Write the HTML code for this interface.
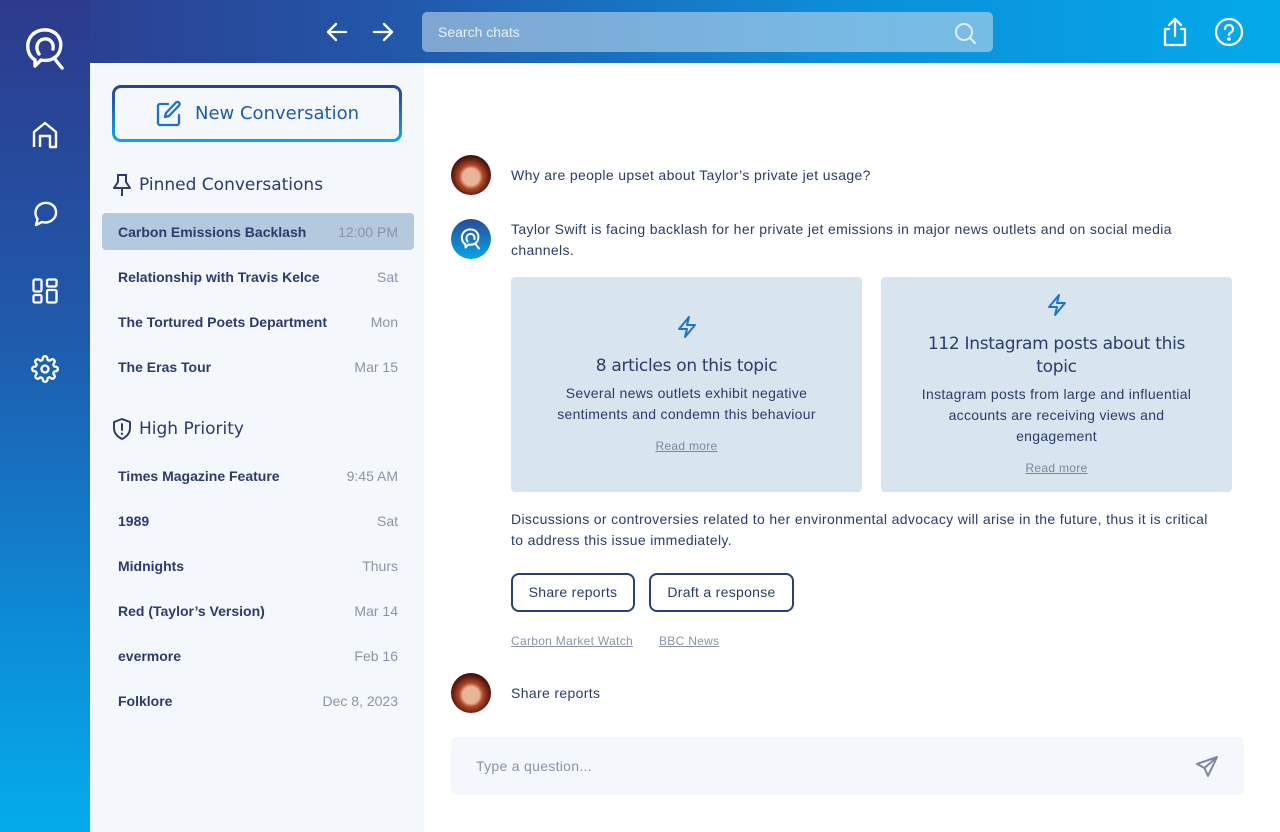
<!DOCTYPE html>
<html><head><meta charset="utf-8"><style>
*{margin:0;padding:0;box-sizing:border-box}
body{width:1280px;height:832px;overflow:hidden;font-family:"Liberation Sans",sans-serif;color:#2b3b6b;background:#fff;position:relative}
.top{position:absolute;left:0;top:0;width:1280px;height:63px;background:linear-gradient(90deg,#2d3a8c 0%,#2356a8 30%,#0e8cd8 65%,#03aaea 100%)}
.side{position:absolute;left:0;top:0;width:90px;height:832px;background:linear-gradient(180deg,#2d3a8c 0%,#1f5aac 40%,#0d8bd6 75%,#04aceb 100%)}
.panel{position:absolute;left:90px;top:63px;width:334px;height:769px;background:#f4f7fc}
.abs{position:absolute}
.search{left:422px;top:12px;width:571px;height:40px;border-radius:5px;background:rgba(190,215,235,.6);color:#e8f0f8;font-size:14px;padding:12px 16px}
.newbox{left:112px;top:85px;width:290px;height:57px;border-radius:9px;padding:3px;background:linear-gradient(180deg,#2c3f8f,#08aaeb)}
.newbox div{width:100%;height:100%;background:#f4f7fc;border-radius:6px;display:flex;align-items:center;justify-content:center;gap:12px;font-size:18px;color:#1f5ba8;font-family:"DejaVu Sans",sans-serif}
.h{font-family:"DejaVu Sans",sans-serif;font-size:17px;color:#2b3b6b;display:flex;align-items:center;gap:7px}
.item{position:absolute;left:102px;width:312px;height:37px;border-radius:4px;display:flex;justify-content:space-between;align-items:center;padding:0 16px;font-size:14px}
.item b{font-weight:bold;color:#2b3b6b}
.item span{color:#8b93a8}
.sel{background:#b4c9de}
.av{position:absolute;left:451px;width:40px;height:40px;border-radius:50%}
.p{position:absolute;font-size:14px;line-height:21px;color:#2b3b6b;letter-spacing:.35px}
.card{position:absolute;background:#d8e4ee;border-radius:4px;text-align:center;color:#2b3b6b}
.card h3{font-family:"DejaVu Sans",sans-serif;font-weight:normal;font-size:17px;line-height:23px;letter-spacing:-.3px}
.card p{font-size:14px;line-height:21px;margin-top:5px;letter-spacing:.3px}
.card a{font-size:12px;color:#7d87a0;text-decoration:underline;display:block;letter-spacing:.3px}
.btn{position:absolute;top:573px;height:39px;border:2px solid #2b3f72;border-radius:8px;font-size:14px;padding:9px 0;text-align:center;color:#2b3b6b;letter-spacing:.3px}
.lnk{position:absolute;top:634px;font-size:12px;color:#8a92a8;text-decoration:underline;letter-spacing:.3px}
.input{left:451px;top:737px;width:793px;height:58px;background:#f4f7fc;border-radius:5px;font-size:14px;color:#8a92a8;padding:21px 25px;letter-spacing:.3px}
</style></head><body>
<div class="top"></div>
<div class="side"></div>
<div class="panel"></div>
<svg class="abs" style="left:24px;top:27px" width="44" height="46" viewBox="0 0 44 46" fill="none" stroke="#fff" stroke-width="3.4" stroke-linecap="round" stroke-linejoin="round"><path d="M11 33 C3 28 1 16 8 8 C15 1 28 1 34 9 C39 16 37 27 30 31"/><path d="M11 33 L11 39 L17 33 C22 34 27 33 30 31"/><path d="M15 27 C11 21 13 13 20 12 C26 11 30 16 29 22"/><path d="M30 31 L38 41"/></svg>
<svg class="abs" style="left:31px;top:121px" width="28" height="28" viewBox="0 0 28 28" fill="none" stroke="#fff" stroke-width="2.4" stroke-linejoin="round"><path d="M3 26 V11 L14 2 L25 11 V26 H19 V15 H9 V26"/></svg>
<svg class="abs" style="left:31px;top:200px" width="28" height="28" viewBox="0 0 28 28" fill="none" stroke="#fff" stroke-width="2.4" stroke-linejoin="round"><path d="M5 25 L6.5 19 C3 14 4 7 10 4 C16 1 24 4 25 11 C26 19 18 24 11 22 Z"/></svg>
<svg class="abs" style="left:32px;top:278px" width="26" height="26" viewBox="0 0 26 26" fill="none" stroke="#fff" stroke-width="2.3"><rect x="1.5" y="1.5" width="8" height="12" rx="1.5"/><rect x="1.5" y="17" width="8" height="7.5" rx="1.5"/><rect x="15" y="1.5" width="9.5" height="7" rx="1.5"/><rect x="15" y="12" width="9.5" height="12.5" rx="1.5"/></svg>
<svg class="abs" style="left:31px;top:355px" width="28" height="28" viewBox="0 0 24 24" fill="none" stroke="#fff" stroke-width="2"><circle cx="12" cy="12" r="3"/><path d="M19.4 15a1.65 1.65 0 0 0 .33 1.820l.06.06a2 2 0 1 1-2.830 2.830l-.06-.06a1.65 1.65 0 0 0-1.820-.33 1.65 1.65 0 0 0-1 1.510V21a2 2 0 1 1-4 0v-.09A1.65 1.65 0 0 0 9 19.4a1.65 1.65 0 0 0-1.820.33l-.06.06a2 2 0 1 1-2.830-2.830l.06-.06A1.65 1.65 0 0 0 4.68 15a1.65 1.65 0 0 0-1.510-1H3a2 2 0 1 1 0-4h.09A1.65 1.65 0 0 0 4.6 9a1.65 1.65 0 0 0-.33-1.820l-.06-.06a2 2 0 1 1 2.830-2.830l.06.06A1.65 1.65 0 0 0 9 4.68a1.65 1.65 0 0 0 1-1.510V3a2 2 0 1 1 4 0v.09a1.65 1.65 0 0 0 1 1.510 1.65 1.65 0 0 0 1.820-.33l.06-.06a2 2 0 1 1 2.830 2.830l-.06.06A1.65 1.65 0 0 0 19.4 9a1.65 1.65 0 0 0 1.510 1H21a2 2 0 1 1 0 4h-.09a1.65 1.65 0 0 0-1.510 1z"/></svg>
<svg class="abs" style="left:325px;top:20px" width="24" height="24" viewBox="0 0 24 24" fill="none" stroke="#fff" stroke-width="2.3" stroke-linecap="round" stroke-linejoin="round"><path d="M21 12H3M11 4L3 12L11 20"/></svg>
<svg class="abs" style="left:371px;top:20px" width="24" height="24" viewBox="0 0 24 24" fill="none" stroke="#fff" stroke-width="2.3" stroke-linecap="round" stroke-linejoin="round"><path d="M3 12H21M13 4L21 12L13 20"/></svg>
<div class="abs search">Search chats</div>
<svg class="abs" style="left:953px;top:21px" width="24" height="24" viewBox="0 0 24 24" fill="none" stroke="#e6eef7" stroke-width="2" stroke-linecap="round"><circle cx="11" cy="11" r="8"/><path d="M17 17L22 22"/></svg>
<svg class="abs" style="left:1161px;top:17px" width="28" height="30" viewBox="0 0 28 30" fill="none" stroke="#fff" stroke-width="2.3" stroke-linecap="round" stroke-linejoin="round"><path d="M8 12H4V28H24V12H20M14 2V19M8 8L14 2L20 8"/></svg>
<svg class="abs" style="left:1214px;top:17px" width="30" height="30" viewBox="0 0 30 30" fill="none" stroke="#fff" stroke-width="2.3" stroke-linecap="round"><circle cx="15" cy="15" r="13"/><path d="M11 12a4 4 0 1 1 5.5 3.7c-1 .5-1.5 1.2-1.5 2.3"/><circle cx="15" cy="22" r=".6" fill="#fff"/></svg>
<div class="abs newbox"><div><svg width="28" height="28" viewBox="0 0 28 28" fill="none" stroke="#1f72c4" stroke-width="2.3" stroke-linecap="round" stroke-linejoin="round"><path d="M13 4H5a2 2 0 0 0-2 2v17a2 2 0 0 0 2 2h17a2 2 0 0 0 2-2v-8"/><path d="M21 2.5a2.1 2.1 0 0 1 3 3L14 16l-4 1 1-4z"/></svg>New Conversation</div></div>
<div class="abs h" style="left:112px;top:173px"><svg width="20" height="24" viewBox="0 0 20 24" fill="none" stroke="#2b3b6b" stroke-width="2" stroke-linejoin="round"><path d="M5 2H15M6 2V9L2 15H18L14 9V2M10 15V23"/></svg>Pinned Conversations</div>
<div class="item sel" style="top:213px"><b>Carbon Emissions Backlash</b><span>12:00 PM</span></div>
<div class="item" style="top:258px"><b>Relationship with Travis Kelce</b><span>Sat</span></div>
<div class="item" style="top:303px"><b>The Tortured Poets Department</b><span>Mon</span></div>
<div class="item" style="top:348px"><b>The Eras Tour</b><span>Mar 15</span></div>
<div class="abs h" style="left:112px;top:417px"><svg width="20" height="24" viewBox="0 0 20 24" fill="none" stroke="#2b3b6b" stroke-width="2" stroke-linejoin="round" stroke-linecap="round"><path d="M10 2L18 5V11C18 17 14 20 10 22C6 20 2 17 2 11V5Z"/><path d="M10 7V13M10 16.5V17"/></svg>High Priority</div>
<div class="item" style="top:457px"><b>Times Magazine Feature</b><span>9:45 AM</span></div>
<div class="item" style="top:502px"><b>1989</b><span>Sat</span></div>
<div class="item" style="top:547px"><b>Midnights</b><span>Thurs</span></div>
<div class="item" style="top:592px"><b>Red (Taylor’s Version)</b><span>Mar 14</span></div>
<div class="item" style="top:637px"><b>evermore</b><span>Feb 16</span></div>
<div class="item" style="top:682px"><b>Folklore</b><span>Dec 8, 2023</span></div>
<div class="av" style="top:155px;background:radial-gradient(circle at 50% 55%,#e8b49a 0 28%,#b24a2a 40%,#6a1f12 60%,#1c0a08 80%)"></div>
<div class="p" style="left:511px;top:165px">Why are people upset about Taylor’s private jet usage?</div>
<div class="av" style="top:219px;background:linear-gradient(180deg,#2a4a9a,#08a6e6)"><svg style="position:absolute;left:9px;top:9px" width="22" height="23" viewBox="0 0 44 46" fill="none" stroke="#fff" stroke-width="4" stroke-linecap="round" stroke-linejoin="round"><path d="M11 33 C3 28 1 16 8 8 C15 1 28 1 34 9 C39 16 37 27 30 31"/><path d="M11 33 L11 39 L17 33 C22 34 27 33 30 31"/><path d="M15 27 C11 21 13 13 20 12 C26 11 30 16 29 22"/><path d="M30 31 L38 41"/></svg></div>
<div class="p" style="left:511px;top:219px;width:690px">Taylor Swift is facing backlash for her private jet emissions in major news outlets and on social media channels.</div>
<div class="card" style="left:511px;top:277px;width:351px;height:215px;padding-top:38px">
<svg width="22" height="24" viewBox="0 0 22 24" fill="none" stroke="#1f72c4" stroke-width="2" stroke-linejoin="round"><path d="M13 2L3 14H11L9 22L19 10H11Z"/></svg>
<h3 style="margin-top:11px">8 articles on this topic</h3><p>Several news outlets exhibit negative<br>sentiments and condemn this behaviour</p><a style="margin-top:14px">Read more</a></div>
<div class="card" style="left:881px;top:277px;width:351px;height:215px;padding-top:16px">
<svg width="22" height="24" viewBox="0 0 22 24" fill="none" stroke="#1f72c4" stroke-width="2" stroke-linejoin="round"><path d="M13 2L3 14H11L9 22L19 10H11Z"/></svg>
<h3 style="margin-top:11px">112 Instagram posts about this<br>topic</h3><p>Instagram posts from large and influential<br>accounts are receiving views and<br>engagement</p><a style="margin-top:14px">Read more</a></div>
<div class="p" style="left:511px;top:509px;width:712px">Discussions or controversies related to her environmental advocacy will arise in the future, thus it is critical to address this issue immediately.</div>
<div class="btn" style="left:511px;width:124px">Share reports</div>
<div class="btn" style="left:649px;width:145px">Draft a response</div>
<div class="lnk" style="left:511px">Carbon Market Watch</div>
<div class="lnk" style="left:659px">BBC News</div>
<div class="av" style="top:673px;background:radial-gradient(circle at 50% 55%,#e8b49a 0 28%,#b24a2a 40%,#6a1f12 60%,#1c0a08 80%)"></div>
<div class="p" style="left:511px;top:683px">Share reports</div>
<div class="abs input">Type a question...</div>
<svg class="abs" style="left:1195px;top:755px" width="24" height="24" viewBox="0 0 24 24" fill="none" stroke="#7d87a0" stroke-width="2" stroke-linejoin="round"><path d="M22 2L2 9L9.5 13L13 21Z"/><path d="M9.5 13L22 2"/></svg>
</body></html>
